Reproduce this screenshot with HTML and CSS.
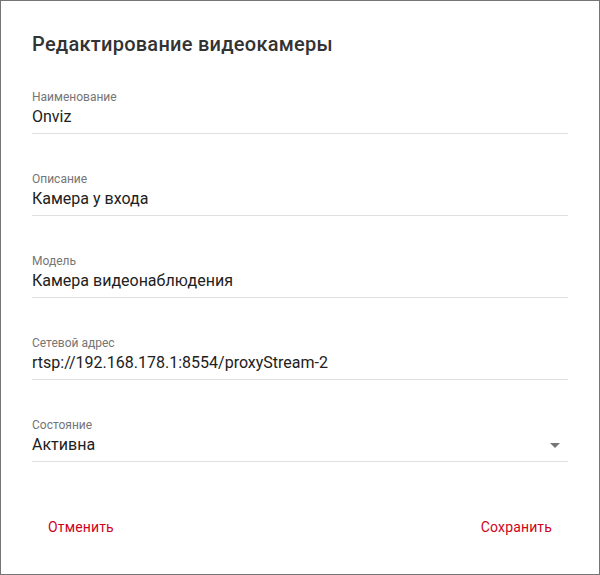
FILE: index.html
```html
<!DOCTYPE html>
<html lang="ru">
<head>
<meta charset="utf-8">
<title>Редактирование видеокамеры</title>
<link rel="stylesheet" href="styles.css">
</head>
<body>
<div class="dialog">
  <h1 class="title">Редактирование видеокамеры</h1>
  <div class="fields">
    <div class="field">
      <div class="label">Наименование</div>
      <div class="value">Onviz</div>
    </div>
    <div class="field">
      <div class="label">Описание</div>
      <div class="value">Камера у входа</div>
    </div>
    <div class="field">
      <div class="label">Модель</div>
      <div class="value">Камера видеонаблюдения</div>
    </div>
    <div class="field">
      <div class="label">Сетевой адрес</div>
      <div class="value">rtsp://192.168.178.1:8554/proxyStream-2</div>
    </div>
    <div class="field">
      <div class="label">Состояние</div>
      <div class="value select">
        <span>Активна</span>
        <span class="arrow"></span>
      </div>
    </div>
  </div>
  <div class="actions">
    <button class="btn">Отменить</button>
    <button class="btn">Сохранить</button>
  </div>
</div>
</body>
</html>
```
FILE: styles.css
```css
* { box-sizing: border-box; }
html, body { margin: 0; padding: 0; background: #fff; }
body { font-family: Roboto, "Noto Sans", sans-serif; }
.dialog {
  width: 600px;
  height: 575px;
  border: 1px solid #757575;
  padding: 31px 31px 0 31px;
  display: flex;
  flex-direction: column;
}
.title {
  margin: 0;
  font-size: 20px;
  line-height: 24px;
  font-weight: 500;
  letter-spacing: 0.25px;
  color: #333;
}
.fields {
  margin-top: 33px;
  display: flex;
  flex-direction: column;
  gap: 37px;
}
.field {
  border-bottom: 1px solid #e0e0e0;
  padding-bottom: 6px;
}
.label {
  font-size: 12px;
  line-height: 16px;
  color: #757575;
}
.value {
  margin-top: 2px;
  font-size: 16px;
  line-height: 20px;
  color: #212121;
}
.select {
  display: flex;
  justify-content: space-between;
  align-items: center;
}
.arrow {
  width: 0;
  height: 0;
  border-left: 5px solid transparent;
  border-right: 5px solid transparent;
  border-top: 5px solid #757575;
  margin-right: 8px;
  margin-top: 1px;
}
.actions {
  margin-top: 47px;
  display: flex;
  justify-content: space-between;
}
.btn {
  font-family: Roboto, "Noto Sans", sans-serif;
  font-size: 14px;
  line-height: 36px;
  height: 36px;
  padding: 0 16px;
  border: 0;
  background: transparent;
  color: #d0021b;
  letter-spacing: 0.15px;
  cursor: pointer;
}
```
